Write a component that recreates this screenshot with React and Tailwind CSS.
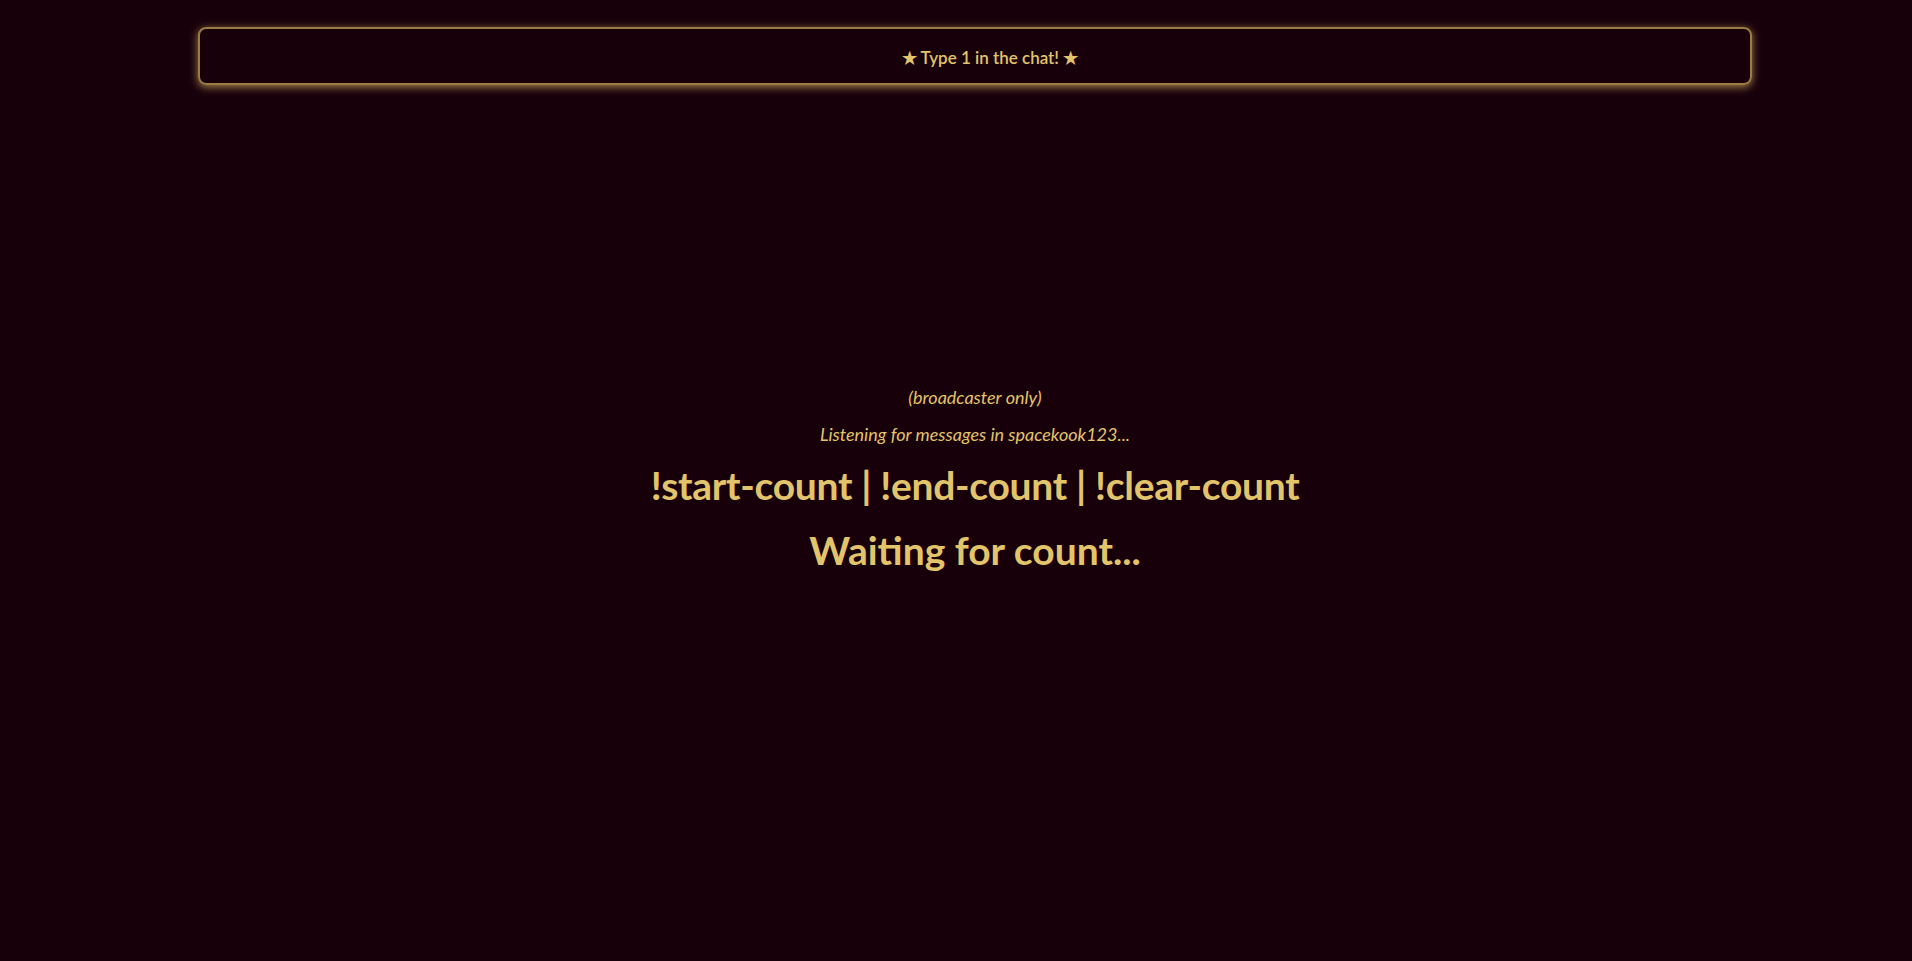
export default function App() {
  return (
    <div
      className="min-h-screen bg-[#18000b] text-[#e2c46a] pt-[27px] pl-[38px]"
      style={{ fontFamily: 'Lato, "Noto Sans", sans-serif' }}
    >
      {/* Banner */}
      <div className="mx-auto w-[1554px] h-[58px] rounded-lg border-2 border-[#9a7c44] shadow-[0_2px_8px_rgba(214,176,96,0.75)] flex items-center justify-center pt-[3px]">
        <span className="ml-[30px] text-[17px] font-semibold">★ Type 1 in the chat! ★</span>
      </div>

      {/* Status */}
      <div className="mt-[298px] flex flex-col items-center text-center">
        <p className="text-[18px] italic leading-[28px]">(broadcaster only)</p>
        <p className="mt-[9px] text-[18px] italic leading-[28px]">Listening for messages in spacekook123...</p>
        <h2 className="mt-[11px] text-[39px] font-bold leading-[52px] tracking-[-0.3px]">
          !start-count | !end-count | !clear-count
        </h2>
        <h1 className="mt-[13px] text-[39px] font-bold leading-[52px]">Waiting for count...</h1>
      </div>
    </div>
  )
}
